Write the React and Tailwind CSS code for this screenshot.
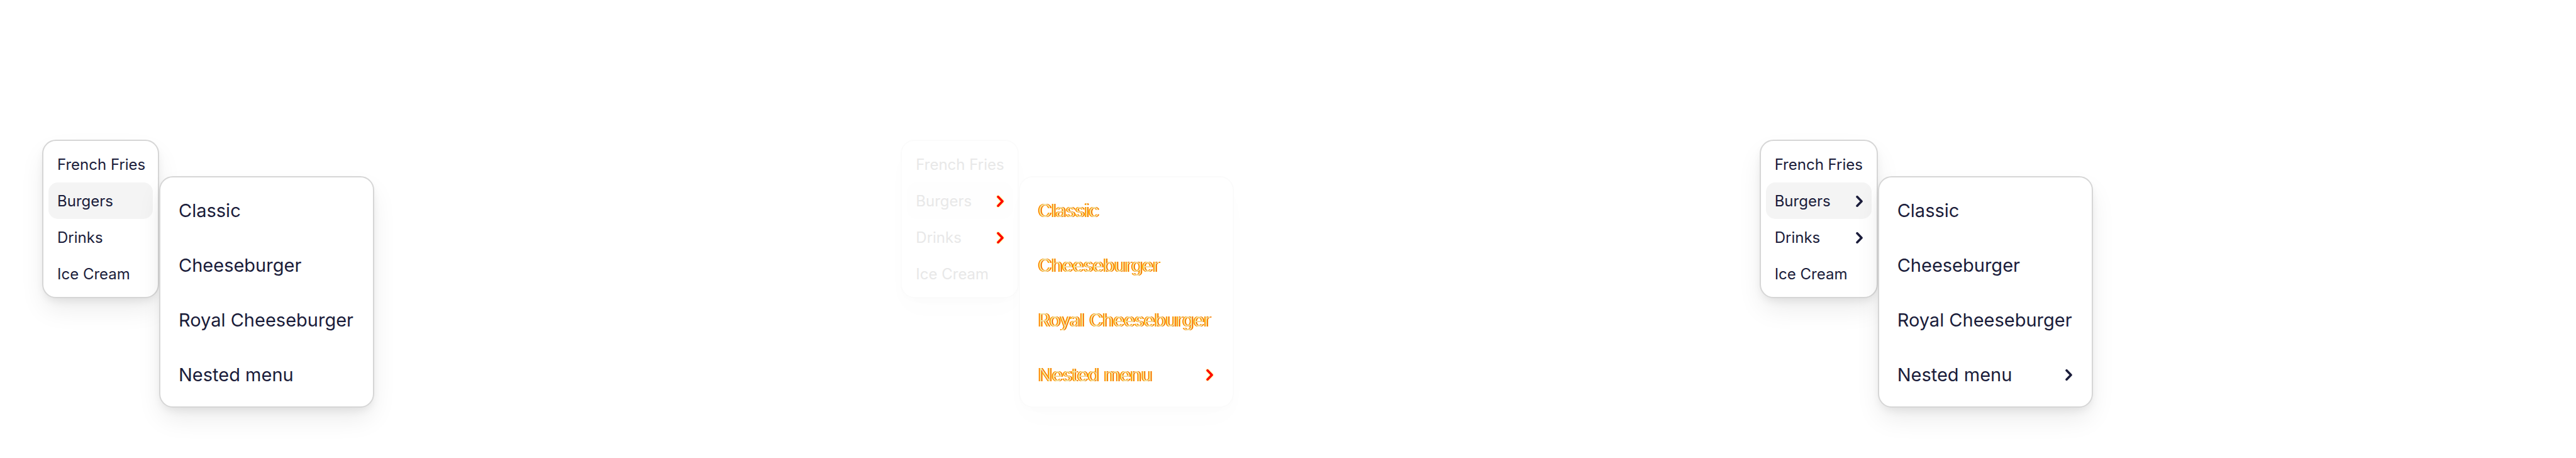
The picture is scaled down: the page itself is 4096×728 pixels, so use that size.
const food = [
  { label: "French Fries" },
  { label: "Burgers", nested: true, active: true },
  { label: "Drinks", nested: true },
  { label: "Ice Cream" },
];

const burgers = [
  { label: "Classic" },
  { label: "Cheeseburger" },
  { label: "Royal Cheeseburger" },
  { label: "Nested menu", nested: true },
];

const tones = {
  normal: {
    text: "text-[#1a1c3a]",
    subText: "text-[#1a1c3a]",
    icon: "text-[#1a1c3a]",
    active: "bg-[#f4f4f4]",
    panel:
      "border-[#d6d6d6] shadow-[0_7px_14px_-3px_rgba(0,0,0,0.08),0_20px_40px_-3px_rgba(0,0,0,0.08)]",
  },
  diff: {
    text: "text-[#e8e8e8]",
    subText:
      "font-light text-[#f0e6a8] [text-shadow:1px_0_0_#ff0000,-1px_0_0_#ffe000,2px_0_0_#ffff00,-2px_0_0_#ff4000]",
    icon: "text-[#ff0000] [filter:drop-shadow(0_0_1px_#ffff00)]",
    active: "bg-[#fefefe]",
    panel:
      "border-[#fbfbfb] shadow-[0_7px_14px_-3px_rgba(0,0,0,0.012),0_20px_40px_rgba(0,0,0,0.012)]",
  },
};

function Chevron({ className }) {
  return (
    <svg
      viewBox="0 0 11 18"
      className={`h-[18px] w-[11px] shrink-0 ${className}`}
      fill="none"
      stroke="currentColor"
      strokeWidth="3.6"
      strokeLinecap="round"
      strokeLinejoin="round"
      aria-hidden="true"
    >
      <path d="M2 1.8 L9 9 L2 16.2" />
    </svg>
  );
}

function Menu({ label, items, tone, icons, width, large }) {
  const t = tones[tone];
  return (
    <ul
      aria-label={label}
      className={`shrink-0 rounded-[22px] border-2 bg-white p-2 ${t.panel} ${width}`}
    >
      {items.map((item) => (
        <li key={item.label}>
          <button
            type="button"
            className={`flex w-full items-center justify-between whitespace-nowrap pt-[2px] text-left ${
              large
                ? `h-[87px] pl-[21px] pr-[23px] text-[29px] ${t.subText}`
                : `h-[58px] rounded-[15px] px-[14px] text-[24px] ${t.text}`
            } ${item.active ? t.active : ""}`}
          >
            {item.label}
            {icons && item.nested && <Chevron className={t.icon} />}
          </button>
        </li>
      ))}
    </ul>
  );
}

function Scene({ tone, icons, width }) {
  return (
    <section className="flex items-start pl-[67px] pt-[222px]">
      <Menu label="Food" items={food} tone={tone} icons={icons} width={width} />
      <div className="pt-[58px]">
        <Menu label="Burgers" items={burgers} tone={tone} icons={icons} width="w-[342px]" large />
      </div>
    </section>
  );
}

export default function App() {
  return (
    <main className="grid min-h-screen grid-cols-3 overflow-hidden bg-white font-['Inter',sans-serif]">
      <Scene tone="normal" icons={false} width="w-[186px]" />
      <Scene tone="diff" icons width="w-[188px]" />
      <Scene tone="normal" icons width="w-[188px]" />
    </main>
  );
}
